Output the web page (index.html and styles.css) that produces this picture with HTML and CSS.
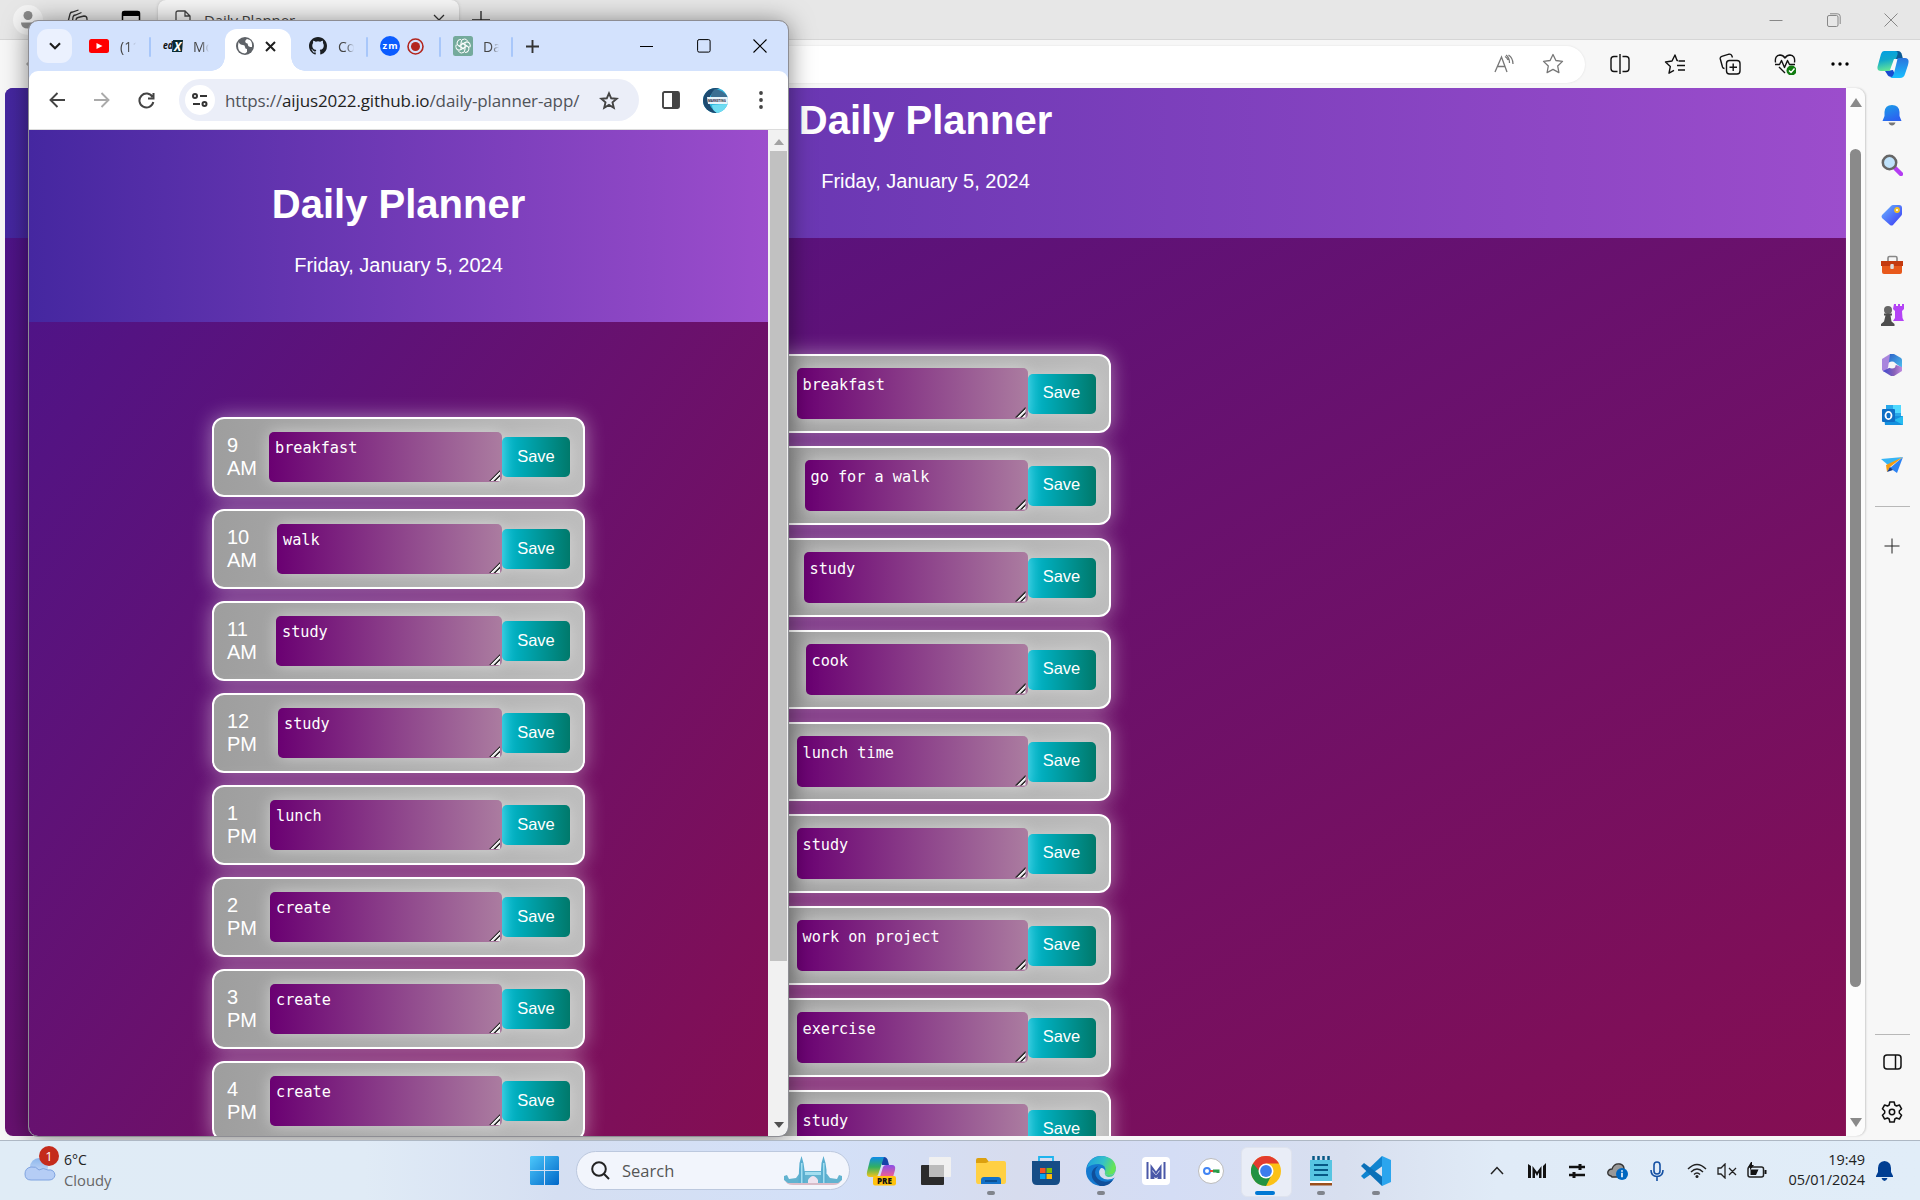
FILE: index.html
```html
<!DOCTYPE html>
<html lang="en">
<head>
<meta charset="utf-8">
<title>Daily Planner</title>
<link rel="stylesheet" href="styles.css">
</head>
<body>
<div class="desktop">

<!-- Edge window -->
<section class="edge">
  <header class="edge-title">
    <span class="avatar"><svg width="30" height="30" viewBox="0 0 30 30"><circle cx="15" cy="15" r="15" fill="#f4f4f4"/><circle cx="15" cy="10.500" r="4.500" fill="#8a8a8a"/><path d="M8 17.500h14q0 6-7 6t-7-6z" fill="#8a8a8a"/></svg></span>
    <span class="workspaces"><svg width="24" height="24" viewBox="0 0 24 24" fill="none" stroke="#333" stroke-width="1.300"><path d="M2 14l2-8q.5-2 2.500-2l6-2M6 17l1-8q.5-2 2.500-2l6-2.500M10 20v-8q0-2 2-2.500l6-1.500q3 0 3 3v6"/></svg></span>
    <span class="tabactions"><svg width="20" height="20" viewBox="0 0 20 20"><rect x="1.500" y="1.500" width="17" height="17" rx="2" fill="none" stroke="#000" stroke-width="1.500"/><path d="M1 6V3q0-2 2-2h14q2 0 2 2v3z"/></svg></span>
    <div class="edge-tab">
      <svg width="18" height="20" viewBox="0 0 18 20" fill="none" stroke="#444" stroke-width="1.300"><path d="M2 19V3q0-2 2-2h7l5 5v13zM11 1v5h5"/></svg>
      <span class="edge-tab-name">Daily Planner</span>
      <svg width="12" height="12" viewBox="0 0 12 12" stroke="#333" stroke-width="1.300"><path d="M1 1l10 10M11 1L1 11"/></svg>
    </div>
    <span class="edge-new"><svg width="18" height="18" viewBox="0 0 18 18" stroke="#222" stroke-width="1.300"><path d="M9 0v18M0 9h18"/></svg></span>
    <span class="edge-controls">
      <svg width="14" height="14" viewBox="0 0 14 14" stroke="#888"><path d="M.5 7.500h13"/></svg>
      <svg width="14" height="14" viewBox="0 0 14 14" fill="none" stroke="#888"><rect x=".5" y="2.500" width="10.500" height="11" rx="1.500"/><path d="M3 .8h7.500q2.700 0 2.700 2.700V11"/></svg>
      <svg width="14" height="14" viewBox="0 0 14 14" stroke="#888"><path d="M.5.5l13 13M13.500.5l-13 13"/></svg>
    </span>
  </header>
  <div class="edge-bar">
    <span class="edge-back"><svg width="20" height="20" viewBox="0 0 20 20" fill="none" stroke="#aaa" stroke-width="1.500"><path d="M9 4L3 10l6 6M3 10h15"/></svg></span>
    <div class="edge-url">
      <svg width="20" height="20" viewBox="0 0 20 20" fill="none" stroke="#777" stroke-width="1.300"><path d="M1 18L7.500 3 13 18M3.500 12.500H11M12 1q3.500 2.500 3.500 8M14 6q-1-2.500-3-3.500M14.500 1Q19 4 19 10"/></svg>
      <svg width="22" height="22" viewBox="0 0 22 22" fill="none" stroke="#777" stroke-width="1.300" stroke-linejoin="round"><path d="M11 1.500l2.900 6 6.600.9-4.800 4.600 1.200 6.600-5.900-3.200-5.900 3.200 1.200-6.600L1.500 8.400l6.600-.9z"/></svg>
    </div>
    <div class="edge-tools">
      <span><svg width="22" height="22" viewBox="0 0 22 22" fill="none" stroke="#111" stroke-width="1.400"><path d="M11 1v20M8.500 18.500H5q-3 0-3-3v-9q0-3 3-3h3.500M13.500 3.500H17q3 0 3 3v9q0 3-3 3h-3.500"/></svg></span>
      <span><svg width="22" height="22" viewBox="0 0 22 22" fill="none" stroke="#111" stroke-width="1.400" stroke-linejoin="round"><path d="M14 7.500h-1L11 2 8 8l-6.500 1 4.800 4.600-1.300 6.600 5-2.800M14.500 8H21M13 12.500h8M14 17h7"/></svg></span>
      <span><svg width="22" height="22" viewBox="0 0 22 22" fill="none" stroke="#111" stroke-width="1.400"><rect x="7.500" y="7.500" width="13.500" height="13.500" rx="3"/><path d="M14.200 10.500v7.500M10.500 14.200H18M5.500 15.500Q4 15.500 3.500 14L1.300 6q-.5-2 1.500-2.700L10 1.200q2-.4 2.700 1.300l.8 2"/></svg></span>
      <span><svg width="22" height="22" viewBox="0 0 22 22" fill="none" stroke="#111" stroke-width="1.400" stroke-linejoin="round"><path d="M1.500 9.500Q.5 2.500 6 2q3 0 5 3 2-3 5-3 5.500.5 4.500 7.500M1 11.500h4.500l2-4 3 7 3-7 2 4H21M5 14l6 6"/><circle cx="17.500" cy="17.500" r="5" fill="#107c10" stroke="none"/><path d="M15 17.500l2 2 3.500-4" stroke="#fff"/></svg></span>
      <span><svg width="18" height="4" viewBox="0 0 18 4"><circle cx="2" cy="2" r="1.700"/><circle cx="9" cy="2" r="1.700"/><circle cx="16" cy="2" r="1.700"/></svg></span>
    </div>
    <span class="copilot"><svg width="32" height="28" viewBox="0 0 32 28"><defs><linearGradient id="cpa" x2=".2" y2="1"><stop offset="0" stop-color="#009fe3"/><stop offset=".5" stop-color="#11a8cc"/><stop offset="1" stop-color="#5fe39a"/></linearGradient><linearGradient id="cpb" x2="0" y2="1"><stop offset="0" stop-color="#2b74dd"/><stop offset="1" stop-color="#19bfff"/></linearGradient></defs><path d="M16 1h5q3 0 4 4l1 4h-7z" fill="#0c5a94"/><path d="M8 21l8-1 3 7h-4q-4 0-5-3z" fill="#184bd0"/><path d="M7 1h11q4 0 2 5l-4 11q-1 4-5 4H4q-5 0-3-6L4 4q1-3 3-3z" fill="url(#cpa)"/><path d="M21 8h7q5 0 3 7l-3 9q-1 4-5 4H13q3-1 4-5l3-12q.5-3 1-3z" fill="url(#cpb)"/><path d="M17 9h3l-4 11h-3z" fill="#f7f7f7"/></svg></span>
  </div>
  <div class="edge-main">
    <div class="page edge-page">
      <div class="hero"><h1>Daily Planner</h1><p>Friday, January 5, 2024</p></div>
      <div class="slots">
        <div class="slot"><span class="hour">9 AM</span><div class="note" style="width:231px">breakfast</div><button class="save">Save</button></div>
        <div class="slot"><span class="hour">10 AM</span><div class="note" style="width:223px">go for a walk</div><button class="save">Save</button></div>
        <div class="slot"><span class="hour">11 AM</span><div class="note" style="width:224px">study</div><button class="save">Save</button></div>
        <div class="slot"><span class="hour">12 PM</span><div class="note" style="width:222px">cook</div><button class="save">Save</button></div>
        <div class="slot"><span class="hour">1 PM</span><div class="note" style="width:231px">lunch time</div><button class="save">Save</button></div>
        <div class="slot"><span class="hour">2 PM</span><div class="note" style="width:231px">study</div><button class="save">Save</button></div>
        <div class="slot"><span class="hour">3 PM</span><div class="note" style="width:231px">work on project</div><button class="save">Save</button></div>
        <div class="slot"><span class="hour">4 PM</span><div class="note" style="width:231px">exercise</div><button class="save">Save</button></div>
        <div class="slot"><span class="hour">5 PM</span><div class="note" style="width:231px">study</div><button class="save">Save</button></div>
      </div>
    </div>
    <div class="edge-scroll"><i class="up"></i><b></b><i class="down"></i></div>
    <aside class="sidebar">
      <span><svg width="20" height="22" viewBox="0 0 20 22"><defs><linearGradient id="bel" x2=".5" y2="1"><stop offset="0" stop-color="#1aa0e8"/><stop offset="1" stop-color="#2b62f0"/></linearGradient></defs><path d="M10 1q7 0 7.500 7v4l2 5H.5l2-5V8Q3 1 10 1z" fill="url(#bel)"/><path d="M6.500 18.500h7q-1 3-3.500 3t-3.500-3z" fill="#777"/></svg></span>
      <span><svg width="22" height="22" viewBox="0 0 22 22"><path d="M14 14l6 6" stroke="#b43df2" stroke-width="4.500" stroke-linecap="round"/><circle cx="8.500" cy="8.500" r="6.700" fill="#bfe2fb" stroke="#666" stroke-width="2.500"/></svg></span>
      <span><svg width="22" height="22" viewBox="0 0 22 22"><defs><linearGradient id="tg" x2="1" y2="1"><stop offset="0" stop-color="#6ab8ff"/><stop offset="1" stop-color="#3a35f4"/></linearGradient></defs><path d="M12 1h6q3 0 3 3v6q0 1-1 2l-8 9q-1.500 1-3 0L1 14q-1-1.500 0-3L10 2q1-1 2-1z" fill="url(#tg)"/><circle cx="16" cy="6" r="2" fill="#fff" stroke="#f5c020" stroke-width="1.800"/></svg></span>
      <span><svg width="24" height="20" viewBox="0 0 24 20"><path d="M8 6V3q0-1.500 1.500-1.500h6Q17 1.500 17 3v3" fill="none" stroke="#888" stroke-width="1.600"/><path d="M2 10h20v7q0 2-2 2H4q-2 0-2-2z" fill="#e8591c"/><path d="M1 6h22v5H1z" fill="#c43a10"/><rect x="10.300" y="9" width="3.500" height="5" rx="1" fill="#ddd"/></svg></span>
      <span><svg width="24" height="24" viewBox="0 0 24 24"><path d="M14 1h2v2h2V1h2v2h2V1h2v5l-2 2 .5 7 1.500 3H13l2-3V8l-2-2z" fill="#b443f5"/><circle cx="8" cy="7" r="4" fill="#666"/><path d="M4 10.500h8v2h-1.500l1 6 3 2.500v2H1v-2l3-2.500 1.500-6H4z" fill="#4d4d4d"/></svg></span>
      <span><svg width="22" height="24" viewBox="0 0 22 24"><defs><linearGradient id="ma" x2="1" y2="1"><stop offset="0" stop-color="#2f63c8"/><stop offset="1" stop-color="#4cc0ee"/></linearGradient><linearGradient id="mb" x2="1" y2="0"><stop offset="0" stop-color="#3f49cf"/><stop offset=".6" stop-color="#8a62b8"/><stop offset="1" stop-color="#c08ae0"/></linearGradient></defs><path d="M1 6l8-5v8l-3 8-3 2-2-2z" fill="#a986dd"/><path d="M9 1h4l7 4q1 1 1 2v8l-7-5-6-1z" fill="url(#ma)"/><path d="M2 18l8-4 5-2 6 2v4l-8 5h-3z" fill="url(#mb)"/><circle cx="11" cy="12" r="3.600" fill="#f7f7f7"/></svg></span>
      <span><svg width="22" height="22" viewBox="0 0 22 22"><rect x="5" y="1" width="15" height="14" fill="#28a8ea"/><path d="M12 1h8v8h-8z" fill="#50d9ff"/><path d="M3 12h19v9H4z" fill="#1490df"/><path d="M22 12v9l-9-5z" fill="#28bdf0"/><rect x="1" y="5" width="13" height="13" rx="1" fill="#0f6fc6"/><ellipse cx="7.500" cy="11.500" rx="3" ry="3.600" fill="none" stroke="#fff" stroke-width="1.800"/></svg></span>
      <span><svg width="22" height="18" viewBox="0 0 22 18"><path d="M0 3L22 1 7 9z" fill="#36b5f5"/><path d="M22 1L5 9l1 7 3-5z" fill="#f39c12"/><path d="M22 1L9 12l7 5z" fill="#2b82f3"/><path d="M6 16l3-5 3 3z" fill="#1a3f88"/></svg></span>
      <hr>
      <span><svg width="16" height="16" viewBox="0 0 16 16" stroke="#222"><path d="M8 .5v15M.5 8h15"/></svg></span>
      <hr class="low">
      <span><svg width="19" height="16" viewBox="0 0 19 16" fill="none" stroke="#111" stroke-width="1.500"><rect x="1" y="1" width="17" height="14" rx="3"/><path d="M12.500 1v14"/></svg></span>
      <span><svg width="22" height="22" viewBox="0 0 22 22" fill="none" stroke="#111" stroke-width="1.500" stroke-linejoin="round"><path d="M8.800 1h4.400l.6 3 1.700 1 2.900-1 2.200 3.800L18.300 10v2l2.300 2.200-2.200 3.800-2.900-1-1.700 1-.6 3H8.800l-.6-3-1.700-1-2.900 1-2.200-3.800L3.700 12v-2L1.400 7.800 3.600 4l2.900 1 1.700-1z"/><circle cx="11" cy="11" r="2.700"/></svg></span>
    </aside>
  </div>
</section>

<!-- Chrome window -->
<section class="chrome">
  <div class="tabs">
    <span class="tab-search"><svg width="12" height="8" viewBox="0 0 12 8" fill="none" stroke="#1f1f1f" stroke-width="2.200"><path d="M1 1.200l5 5 5-5"/></svg></span>
    <div class="tab t1 line"><svg width="20" height="14" viewBox="0 0 20 14"><rect width="20" height="14" rx="2.500" fill="#f00"/><path d="M7.500 4l6 3-6 3z" fill="#fff"/></svg><span class="tname">(11)</span></div>
    <div class="tab t2"><svg width="20" height="13" viewBox="0 0 20 13"><path d="M10 0h10l-1 12h-10z" fill="#0b2c33"/><text x="0" y="9" font-family="Open Sans, sans-serif" font-size="10" font-weight="700" font-style="italic" fill="#111" textLength="10" lengthAdjust="spacingAndGlyphs">ed</text><text x="11" y="10.500" font-family="Open Sans, sans-serif" font-size="12" font-weight="700" font-style="italic" fill="#fff">X</text></svg><span class="tname">Mo</span></div>
    <div class="tab active"><svg width="18" height="18" viewBox="0 0 18 18"><circle cx="9" cy="9" r="9" fill="#5f6368"/><path d="M2.500 5Q4 8 7 8q2 0 2 2t2 2v3l-2 1.500Q2 16 2 9zM11 2q-3 2-1 4 2 0 2 2t4 2q.500-5-2-7z" fill="#fff"/></svg><svg width="11" height="11" viewBox="0 0 11 11" stroke="#1f1f1f" stroke-width="2"><path d="M1 1l9 9M10 1l-9 9"/></svg></div>
    <div class="tab t3 line"><svg width="18" height="18" viewBox="0 0 16 16"><path fill="#1b1f23" d="M8 0C3.580 0 0 3.580 0 8c0 3.540 2.290 6.530 5.470 7.590.4.070.55-.17.55-.38 0-.19-.01-.82-.01-1.490-2.010.37-2.530-.49-2.690-.94-.09-.23-.48-.94-.82-1.130-.28-.15-.68-.52-.01-.53.63-.01 1.080.58 1.230.82.72 1.210 1.870.87 2.330.66.070-.52.28-.87.51-1.070-1.780-.2-3.640-.89-3.640-3.950 0-.87.31-1.590.82-2.150-.08-.2-.36-1.020.08-2.120 0 0 .67-.21 2.200.82a7.600 7.600 0 014 0c1.530-1.040 2.200-.82 2.200-.82.44 1.100.16 1.920.08 2.120.51.56.82 1.270.82 2.150 0 3.070-1.870 3.750-3.650 3.950.29.25.54.73.54 1.480 0 1.070-.01 1.930-.01 2.200 0 .21.15.46.55.38A8 8 0 0016 8c0-4.420-3.580-8-8-8z"/></svg><span class="tname">Co</span></div>
    <div class="tab t4 line"><svg width="20" height="20" viewBox="0 0 20 20"><circle cx="10" cy="10" r="10" fill="#0b5cff"/><text x="10" y="13" text-anchor="middle" font-family="Open Sans, sans-serif" font-weight="700" font-size="9.500" textLength="15" fill="#fff">zm</text></svg><svg width="17" height="17" viewBox="0 0 17 17"><circle cx="8.500" cy="8.500" r="7.500" fill="none" stroke="#b3261e" stroke-width="1.600"/><circle cx="8.500" cy="8.500" r="4.500" fill="#b3261e"/></svg></div>
    <div class="tab t5 line"><svg width="20" height="20" viewBox="0 0 20 20"><rect width="20" height="20" rx="2.500" fill="#74aa9c"/><g fill="none" stroke="#fff" stroke-width="1"><path id="petal" d="M8 13V6.500q0-3.500 3.500-3.500 2 0 3 2"/><use href="#petal" transform="rotate(60 10 10)"/><use href="#petal" transform="rotate(120 10 10)"/><use href="#petal" transform="rotate(180 10 10)"/><use href="#petal" transform="rotate(240 10 10)"/><use href="#petal" transform="rotate(300 10 10)"/></g></svg><span class="tname">Da</span></div>
    <span class="newtab"><svg width="13" height="13" viewBox="0 0 13 13" stroke="#333" stroke-width="1.900"><path d="M6.500 0v13M0 6.500h13"/></svg></span>
    <span class="wincontrols">
      <svg width="14" height="14" viewBox="0 0 14 14" stroke="#000"><path d="M0 7.500h13"/></svg>
      <svg width="14" height="14" viewBox="0 0 14 14" fill="none" stroke="#000"><rect x=".6" y=".6" width="12.500" height="12.500" rx="1.500"/></svg>
      <svg width="14" height="14" viewBox="0 0 14 14" stroke="#000" stroke-width="1.100"><path d="M.5.5l13 13M13.500.5l-13 13"/></svg>
    </span>
  </div>
  <div class="toolbar">
    <span class="nav"><svg width="16" height="16" viewBox="0 0 16 16" fill="none" stroke="#444" stroke-width="1.900"><path d="M8.500 1l-7 7 7 7M1.500 8H16"/></svg></span>
    <span class="nav"><svg width="16" height="16" viewBox="0 0 16 16" fill="none" stroke="#aaa" stroke-width="1.900"><path d="M7.500 1l7 7-7 7M14.500 8H0"/></svg></span>
    <span class="nav"><svg width="17" height="17" viewBox="0 0 17 17" fill="none" stroke="#444" stroke-width="2"><path d="M14.500 5A7 7 0 1 0 15.300 10M15.500 1v5.500H10"/></svg></span>
    <div class="omnibox">
      <span class="siteinfo"><svg width="16" height="14" viewBox="0 0 16 14" fill="none" stroke="#333" stroke-width="2"><circle cx="3" cy="3" r="2"/><path d="M8 3h7M1 11h7"/><circle cx="12.500" cy="11" r="2"/></svg></span>
      <span class="url">https://<b>aijus2022.github.io</b>/daily-planner-app/</span>
      <svg width="20" height="19" viewBox="0 0 20 19" fill="none" stroke="#444" stroke-width="1.900"><path d="M10 2.300l2.200 5 5.500.5-4.200 3.600 1.300 5.300-4.800-2.800-4.800 2.800 1.300-5.300L2.300 7.800l5.500-.5z"/></svg>
    </div>
    <span class="tool"><svg width="18" height="18" viewBox="0 0 18 18"><rect x="1" y="1" width="16" height="16" rx="1.500" fill="none" stroke="#444" stroke-width="1.900"/><path d="M10 1h7v16h-7z" fill="#444"/></svg></span>
    <span class="tool profile"><svg width="25" height="25" viewBox="0 0 25 25"><defs><clipPath id="pc"><circle cx="12.500" cy="12.500" r="12.500"/></clipPath></defs><g clip-path="url(#pc)"><path fill="#2cb4dc" d="M0 0h25v25H0z"/><path d="M0 0h18q-10 2-12 12 0 8 8 13H0z" fill="#1d4a70"/><path d="M12 1q8 1 13 8H8q0-5 4-8z" fill="#3c6f92"/><path d="M9 17q8-1 16-1l-5 9h-6q-5-3-5-8z" fill="#6fdcf2"/><path d="M4 9h21v7H5z" fill="#e8f4fa"/><text x="5" y="14" font-family="Open Sans, sans-serif" font-weight="700" font-size="4" textLength="18" lengthAdjust="spacingAndGlyphs" fill="#223">MARKETING</text></g></svg></span>
    <span class="tool dots"><svg width="4" height="18" viewBox="0 0 4 18" fill="#444"><circle cx="2" cy="2" r="1.900"/><circle cx="2" cy="9" r="1.900"/><circle cx="2" cy="16" r="1.900"/></svg></span>
  </div>
  <div class="chrome-main">
    <div class="page chrome-page">
      <div class="hero"><h1>Daily Planner</h1><p>Friday, January 5, 2024</p></div>
      <div class="slots">
        <div class="slot"><span class="hour">9<br>AM</span><div class="note" style="width:233px">breakfast</div><button class="save">Save</button></div>
        <div class="slot"><span class="hour">10<br>AM</span><div class="note" style="width:225px">walk</div><button class="save">Save</button></div>
        <div class="slot"><span class="hour">11<br>AM</span><div class="note" style="width:226px">study</div><button class="save">Save</button></div>
        <div class="slot"><span class="hour">12<br>PM</span><div class="note" style="width:224px">study</div><button class="save">Save</button></div>
        <div class="slot"><span class="hour">1<br>PM</span><div class="note" style="width:232px">lunch</div><button class="save">Save</button></div>
        <div class="slot"><span class="hour">2<br>PM</span><div class="note" style="width:232px">create</div><button class="save">Save</button></div>
        <div class="slot"><span class="hour">3<br>PM</span><div class="note" style="width:232px">create</div><button class="save">Save</button></div>
        <div class="slot"><span class="hour">4<br>PM</span><div class="note" style="width:232px">create</div><button class="save">Save</button></div>
      </div>
    </div>
    <div class="chrome-scroll"><i class="up"></i><b></b><i class="down"></i></div>
  </div>
</section>

<!-- Taskbar -->
<footer class="taskbar">
  <div class="weather">
    <span class="cloud"><svg width="32" height="24" viewBox="0 0 32 24"><defs><linearGradient id="cl" x2="0" y2="1"><stop offset="0" stop-color="#8db7ec"/><stop offset="1" stop-color="#cfdefa"/></linearGradient></defs><circle cx="15" cy="10" r="9" fill="url(#cl)"/><path d="M7 10q5-1 8 3 4-3 9 0 6-1 7 5-1 5-6 5H7q-6 0-6-6t6-7z" fill="#b5cdf5" stroke="#7fa3e0"/></svg><em>1</em></span>
    <span class="wtext">6°C<small>Cloudy</small></span>
  </div>
  <span class="app"><svg width="29" height="29" viewBox="0 0 29 29"><defs><linearGradient id="win" gradientUnits="userSpaceOnUse" x1="0" y1="0" x2="29" y2="29"><stop offset="0" stop-color="#4cc8fb"/><stop offset="1" stop-color="#0067c8"/></linearGradient></defs><path d="M1 0h13v14H0V1zM15 0h13l1 1v13H15zM0 15h14v14H1l-1-1zM15 15h14v13l-1 1H15z" fill="url(#win)"/></svg></span>
  <div class="search"><svg width="19" height="19" viewBox="0 0 19 19" fill="none" stroke="#222" stroke-width="2"><circle cx="8" cy="8" r="6.800"/><path d="M12.800 12.800l5.200 5.200"/></svg><span>Search</span>
    <svg width="58" height="31" viewBox="0 0 58 31"><path d="M1 25h56q-1 5-8 5H9q-7 0-8-5z" fill="#d8bcc8"/><path d="M0 21l3-1 2 4 7-1 3-4h5v-3h18v3h5l3 4 7 1 2-4 3 1v4l-4 3H4l-4-3z" fill="#62b3d0"/><path d="M15 15l.5-7 2-7 2 7 1 7v13h-6zM37 15l.5-7 2-7 2 7 1 7v13h-6z" fill="#58aed0"/><path d="M17 8h1.500v20H17zM39 8h1.500v20H39zM21 17h16v3H21z" fill="#a3def0"/><path d="M24 28v-3q5-8 10 0v3z" fill="#eee3ef"/></svg>
  </div>
  <div class="apps">
    <span class="app"><svg width="30" height="30" viewBox="0 0 30 30"><defs><linearGradient id="pa" x2="0" y2="1"><stop offset="0" stop-color="#0f8be8"/><stop offset=".5" stop-color="#32b060"/><stop offset="1" stop-color="#f5c51a"/></linearGradient><linearGradient id="pb" x2="0" y2="1"><stop offset="0" stop-color="#8a4fe8"/><stop offset="1" stop-color="#f5608c"/></linearGradient></defs><path d="M14 1h4q3 0 4 4l1 4h-7z" fill="#1643a8"/><path d="M7 1h11L12 19q-1 2-3 2H4q-4 0-3-5L4 4q1-3 3-3z" fill="url(#pa)"/><path d="M20 9h6q4 0 3 5l-2 7H14l3-10q1-2 3-2z" fill="url(#pb)"/><rect x="7" y="20" width="23" height="9.500" rx="2" fill="#ffc20e"/><text x="18.500" y="27.700" text-anchor="middle" font-family="Open Sans, sans-serif" font-weight="800" font-size="8" fill="#111">PRE</text></svg></span>
    <span class="app"><svg width="30" height="30" viewBox="0 0 30 30"><rect x="0" y="9" width="23" height="20" rx="1" fill="#2b2b2b"/><rect x="8" y="1" width="22" height="20" rx="1" fill="#f0f0f0"/><path d="M8 9h15v12H8z" fill="#bbb"/></svg></span>
    <span class="app run"><svg width="30" height="28" viewBox="0 0 30 28"><path d="M0 3q0-2 2-2h8l3 4h15v6H0z" fill="#dca00f"/><path d="M0 6h10l4-2h14q2 0 2 2v18q0 3-2 3H2q-2 0-2-3z" fill="#ffd044"/><path d="M5 27v-4q0-3 3-3h14q3 0 3 3v4z" fill="#1271c9"/><path d="M9 24h12" stroke="#073e78" stroke-width="1.300"/></svg></span>
    <span class="app"><svg width="30" height="30" viewBox="0 0 30 30"><path d="M8 6V1h14v5" fill="none" stroke="#1fb4ee" stroke-width="1.800"/><path d="M1 5h28v19q0 5-5 5H6q-5 0-5-5z" fill="#164d86"/><path d="M9 12h5.500v5H9z" fill="#f35325"/><path d="M15.500 12H21v5h-5.500z" fill="#81bc06"/><path d="M9 18h5.500v5H9z" fill="#05a6f0"/><path d="M15.500 18H21v5h-5.500z" fill="#ffba08"/></svg></span>
    <span class="app run"><svg width="30" height="30" viewBox="0 0 30 30"><defs><linearGradient id="eg" x2="1" y2=".3"><stop offset="0" stop-color="#1b9de2"/><stop offset=".6" stop-color="#35c1c8"/><stop offset="1" stop-color="#66e457"/></linearGradient></defs><circle cx="15" cy="15" r="15" fill="#1479d0"/><path d="M1 12Q4 0 16 0q13 1 14 12 0 7-7 7-5 0-4-3 2-7-6-8-8 0-12 4z" fill="url(#eg)"/><path d="M12 10q-6 6 0 13 6 5 15 1-5 7-13 6Q4 24 6 16q1-4 6-6z" fill="#104f9a"/><path d="M19 16q-1 3 4 3 7 0 7-7v9q-9 5-15 0-4-5 0-9 4 0 4 4z" fill="#d7dcee"/><path d="M19 16q-1 3 4 3 7 0 7-7-1 10-8 9-4-1-3-5z" fill="#49d18c"/></svg></span>
    <span class="app"><svg width="28" height="28" viewBox="0 0 28 28"><rect width="28" height="28" rx="4" fill="#fff"/><path d="M5.500 5v17M22.500 5v17M9.500 22V10l4.500 6 4.500-6v12M11.500 22v-5l2.500 3 2.500-3v5" fill="none" stroke="#4a58a8" stroke-width="2"/></svg></span>
    <span class="app"><svg width="26" height="26" viewBox="0 0 26 26"><circle cx="13" cy="13" r="12.500" fill="#fff" stroke="#bbb"/><circle cx="9" cy="13" r="3" fill="none" stroke="#4285f4" stroke-width="2"/><path d="M12 13h4" stroke="#ea4335" stroke-width="2"/><path d="M15 13h5v2" fill="none" stroke="#2a9c48" stroke-width="3"/></svg></span>
    <span class="app run current"><svg width="30" height="30" viewBox="0 0 30 30"><circle cx="15" cy="15" r="15" fill="#fbc116"/><path d="M15 15L2 7.500A15 15 0 0 0 15 30l6-12z" fill="#229342"/><path d="M15 15H8.500L2 7.500A15 15 0 0 1 28 7.500H15z" fill="#e33b2e"/><circle cx="15" cy="15" r="7.500" fill="#fff"/><circle cx="15" cy="15" r="5.900" fill="#3b7ded"/></svg></span>
    <span class="app run"><svg width="22" height="30" viewBox="0 0 22 30"><path d="M0 26h22v3.500H0z" fill="#9a4f1c"/><path d="M0 4h22v22H0z" fill="#57c5e2"/><path d="M0 25h22v2H0z" fill="#fff"/><path d="M4 9h14M4 14h14M4 19h14" stroke="#075985" stroke-width="1.900"/><path d="M3.500 0v4M8.500 0v4M13.500 0v4M18.500 0v4" stroke="#075985" stroke-width="2.500"/></svg></span>
    <span class="app run"><svg width="30" height="30" viewBox="0 0 30 30"><path d="M0 20l21-20 2 5v4L3 23z" fill="#1084d0"/><path d="M0 10l3-3 20 15v5l-2 3z" fill="#0b70b8"/><path d="M21 0l9 4v22l-9 4z" fill="#2ba5ee"/></svg></span>
  </div>
  <div class="tray">
    <span><svg width="14" height="9" viewBox="0 0 14 9" fill="none" stroke="#222" stroke-width="1.500"><path d="M1 8l6-6.500L13 8"/></svg></span>
    <span><svg width="18" height="16" viewBox="0 0 18 16" fill="#111"><path d="M0 1l3 2v12H0zM18 0l-3 3v12h3zM4.500 3L9 9l4.500-6v12H11V9.500L9 13 7 9.500V15H4.500z"/></svg></span>
    <span><svg width="18" height="16" viewBox="0 0 18 16" stroke="#111" fill="none"><path d="M1 4h16M1 12h16" stroke-width="2.500"/><path d="M12 1v6M6 9v6" stroke-width="3"/></svg></span>
    <span><svg width="21" height="18" viewBox="0 0 21 18"><path d="M4 14Q0 13 1 9.500 2 7 5 7q2-6 8-5 4 1 4 5l-6 8H5z" fill="#999" stroke="#333" stroke-width="1.400"/><circle cx="15" cy="12" r="6" fill="#0067c0"/><path d="M15 10.800v4.400M15 8.200v1.500" stroke="#fff" stroke-width="1.600"/></svg></span>
    <span><svg width="14" height="20" viewBox="0 0 14 20" fill="none" stroke="#1450a3" stroke-width="1.600"><rect x="4" y="1" width="6" height="12" rx="3"/><path d="M1 9q0 6.500 6 6.500T13 9M7 16v4"/></svg></span>
    <span class="q first"><svg width="20" height="16" viewBox="0 0 20 16" fill="none" stroke="#222" stroke-width="1.400"><path d="M1 6q9-9 18 0M4 9q6-6 12 0M7 11.500q3-3 6 0"/><circle cx="10" cy="13.500" r="1.500" fill="#222" stroke="none"/></svg></span>
    <span class="q"><svg width="20" height="16" viewBox="0 0 20 16" fill="none" stroke="#222" stroke-width="1.300"><path d="M1 5h3l4-4v14l-4-4H1zM12 5l7 7M19 5l-7 7"/></svg></span>
    <span class="q"><svg width="20" height="17" viewBox="0 0 20 17"><rect x="1" y="5" width="15.500" height="10" rx="2" fill="none" stroke="#222" stroke-width="1.500"/><path d="M3.500 7.500h8L9 13H3.500zM17.500 8h2v4h-2zM4 0L1 5h2v3l4-5H5V0z" fill="#111"/></svg></span>
    <div class="clock">19:49<br>05/01/2024</div>
    <span class="bell"><svg width="17" height="20" viewBox="0 0 17 20" fill="#003e92"><path d="M8.500 0Q15 1 15 7v4l2 4v1H0v-1l2-4V7Q2 1 8.500 0zM5.500 17h6q-1 3-3 3t-3-3z"/></svg></span>
  </div>
</footer>
</div>
</body>
</html>
```

FILE: styles.css
```css
* { box-sizing: border-box; }
body { margin: 0; font-family: "Open Sans", "Noto Sans", sans-serif; }
svg { display: block; flex: none; }
.desktop { position: relative; width: 1920px; height: 1200px; overflow: hidden; display: flex; flex-direction: column; background: #f7f7f7; }

/* Edge */
.edge { height: 1140px; display: flex; flex-direction: column; background: #f7f7f7; }
.edge-title { height: 40px; background: #e7e7e7; border-bottom: 1px solid #d6d6d6; display: flex; align-items: center; }
.avatar { margin-left: 13px; }
.workspaces { margin-left: 23px; }
.tabactions { margin-left: 31px; }
.edge-tab { align-self: stretch; width: 301px; margin-left: 17px; padding: 0 14px 0 16px; display: flex; align-items: center; background: #f5f5f5; border-radius: 8px 8px 0 0; box-shadow: 0 0 3px #bbb; }
.edge-tab-name { margin-left: 12px; flex: 1; font-size: 15px; color: #444; line-height: 20px; letter-spacing: -.1px; }
.edge-new { margin-left: 13px; }
.edge-controls { margin-left: auto; margin-right: 22px; display: flex; gap: 43.500px; }
.edge-bar { height: 48px; display: flex; align-items: center; }
.edge-back { width: 400px; padding-left: 24px; }
.edge-url { width: 1185px; height: 37px; border-radius: 19px; background: #fff; box-shadow: 0 0 2px #ddd; display: flex; align-items: center; justify-content: flex-end; gap: 28px; padding-right: 21px; }
.edge-tools { margin-left: 7px; display: flex; align-items: center; }
.edge-tools span { width: 55px; display: flex; justify-content: center; }
.copilot { width: 51px; display: flex; justify-content: center; }
.edge-main { height: 1052px; display: flex; padding-left: 5px; }
.edge-page { width: 1841px; border-radius: 8px 0 0 8px; }
.edge-scroll { width: 19px; height: 1048px; background: #fcfcfc; border-radius: 0 9px 9px 0; box-shadow: 1px 0 2px #ccc; display: flex; flex-direction: column; align-items: center; justify-content: space-between; padding: 10px 0 9px; }
.edge-scroll b { width: 11px; height: 838px; margin-bottom: 90px; border-radius: 6px; background: #8a8a8a; }
.up { border: 6px solid transparent; border-top: 0; border-bottom: 9px solid #8a8a8a; }
.down { border: 6px solid transparent; border-bottom: 0; border-top: 9px solid #8a8a8a; }
.sidebar { width: 54px; padding: 2px 0 3px; display: flex; flex-direction: column; align-items: center; }
.sidebar span { width: 100%; height: 50px; display: flex; align-items: center; justify-content: center; }
.sidebar hr { width: 35px; margin: 16px 0 14px; border: 0; height: 1px; flex: none; background: #b8b8b8; }
.sidebar hr.low { margin: auto 0 2px; }

/* Planner page, shown in both windows */
.page { height: 1048px; overflow: hidden; background: linear-gradient(to bottom right, #4a148c, #880e4f 106%); font-family: "Liberation Sans", Arial, sans-serif; color: #fff; }
.hero { height: 192px; padding-top: 51px; text-align: center; background: linear-gradient(to right, #4527a0, #9c4dcc); }
.hero h1 { margin: 0; font-size: 40px; line-height: 46px; }
.hero p { margin: 24px 0 0; font-size: 20px; line-height: 28px; }
.slots { width: 373px; margin: 95px auto 0; display: flex; flex-direction: column; gap: 12px; }
.slot { height: 80px; flex: none; display: flex; align-items: center; padding: 0 13px; border: 2px solid #fff; border-radius: 12px; background: linear-gradient(to right, #9e9e9e, #bdbdbd); box-shadow: 0 0 20px rgba(255,255,255,.45); }
.hour { width: 42px; flex: 1; font-size: 20px; line-height: 23px; }
.note { position: relative; height: 50px; flex: none; padding: 5px 6px; border-radius: 5px; background: linear-gradient(to right, #6a0072, #ab7ca0); box-shadow: 0 0 15px rgba(255,255,255,.45); font: 15.200px/22px "DejaVu Sans Mono", monospace; }
.note::after { content: ""; position: absolute; right: 2px; bottom: 1px; width: 11px; height: 11px; background: linear-gradient(135deg, transparent 45%, #333 46% 55%, #eee 56% 68%, #333 69% 78%, #eee 79%); clip-path: polygon(100% 0, 100% 100%, 0 100%); }
.save { width: 68px; height: 40px; flex: none; padding: 0 0 2px; border: 0; border-radius: 5px; background: linear-gradient(to right, #00bcd4, #00796b); box-shadow: 0 0 15px rgba(255,255,255,.35); color: #fff; font: 16.500px "Liberation Sans", Arial, sans-serif; }
.edge-page .hero { margin-top: -42px; }
.edge-page .slots { width: 374px; padding-right: 2px; margin-top: 116px; gap: 13px; }
.edge-page .slot { height: 79px; }
.edge-page .note { height: 51px; margin-top: -1px; padding-top: 6px; }

/* Chrome window floats over Edge */
.chrome { position: absolute; left: 29px; top: 21px; width: 759px; height: 1115px; display: flex; flex-direction: column; background: #d3e2fd; border-radius: 9px; overflow: hidden; outline: 1px solid #8d8d93; box-shadow: 0 2px 26px rgba(0,0,0,.5); }
.tabs { height: 50px; display: flex; padding: 8px 21px 0 8px; }
.tabs > * { height: 34px; }
.tab-search { width: 35px; border-radius: 11px; background: #ebf1fe; display: flex; align-items: center; justify-content: center; }
.tab { display: flex; align-items: center; position: relative; }
.line::after { content: ""; position: absolute; right: 0; top: 8px; width: 2.500px; height: 20px; border-radius: 2px; background: #a8c7fa; }
.tname { width: 16px; overflow: hidden; white-space: nowrap; font-size: 14px; color: #444; -webkit-mask: linear-gradient(to right, #000 50%, transparent); }
.t1 { width: 79px; padding-left: 17px; gap: 11px; }
.t2 { width: 74px; padding-left: 12px; gap: 10px; }
.t3 { width: 77px; padding-left: 18px; gap: 11px; }
.t4 { width: 73px; padding-left: 12px; gap: 7px; }
.t5 { width: 72px; padding-left: 12px; gap: 10px; }
.tabs .active { width: 66px; height: 42px; padding: 0 15px 8px 11px; justify-content: space-between; background: #fff; border-radius: 12px 12px 0 0; }
.active::before, .active::after { content: ""; position: absolute; bottom: 0; width: 14px; height: 14px; }
.active::before { right: 100%; background: radial-gradient(circle at 0 0, transparent 13.500px, #fff 14px); }
.active::after { left: 100%; background: radial-gradient(circle at 100% 0, transparent 13.500px, #fff 14px); }
.newtab { padding-left: 13px; display: flex; align-items: center; }
.wincontrols { margin-left: auto; display: flex; align-items: center; gap: 42.500px; }
.toolbar { height: 59px; padding-left: 5px; display: flex; align-items: center; background: #fff; border-bottom: 1px solid #dcdcdc; border-radius: 9px 9px 0 0; }
.nav { width: 45px; display: flex; justify-content: center; }
.omnibox { width: 460px; height: 42px; margin-left: 10px; padding: 0 20px 0 6px; border-radius: 21px; background: #ebeef8; display: flex; align-items: center; }
.siteinfo { width: 30px; height: 30px; border-radius: 50%; background: #fff; display: flex; align-items: center; justify-content: center; }
.url { flex: 1; margin-left: 10px; font-size: 17px; white-space: nowrap; color: #50535a; letter-spacing: -.12px; }
.url b { font-weight: 400; color: #1f1f1f; }
.tool { width: 45px; display: flex; justify-content: center; margin-left: 9px; }
.profile { margin-left: 0; }
.dots { margin-left: 0; }
.chrome-main { display: flex; height: 1006px; }
.chrome-page { width: 739px; height: 1006px; }
.chrome-scroll { width: 20px; background: #f1f1f1; display: flex; flex-direction: column; align-items: center; padding: 9px 0 8px 1px; }
.chrome-scroll b { width: 17px; height: 810px; margin: 6px 0 auto; background: #c1c1c1; }
.chrome-scroll i { border-left-width: 5px; border-right-width: 5px; }
.chrome-scroll .up { border-bottom: 6px solid #a3a3a3; }
.chrome-scroll .down { border-top: 6px solid #505050; }

/* Taskbar */
.taskbar { position: relative; height: 60px; display: flex; align-items: center; border-top: 1px solid #aeb8c4; background: linear-gradient(to right, #e0ecf6 0, #e0ebf6 19%, #d5dff2 29%, #d3e0f8 43%, #d7dcee 53%, #d4ddf5 61%, #d8dfef 70%, #e0ebf7 78%, #e1edf8); }
.weather { width: 517px; padding-left: 24px; display: flex; align-items: center; gap: 8px; }
.cloud { position: relative; top: -2px; }
.cloud em { position: absolute; right: -3px; top: -11px; width: 20px; height: 20px; border-radius: 50%; background: #c42b1c; color: #fff; font: 13px/20px "Open Sans", sans-serif; text-align: center; }
.wtext { margin-top: -2px; font-size: 14px; line-height: 20px; color: #222; }
.wtext small { display: block; font-size: 14.800px; color: #666; }
.app { position: relative; width: 55px; height: 48px; display: flex; align-items: center; justify-content: center; }
.search { width: 274px; height: 39px; margin: 0 3px 0 4px; padding: 0 7px 0 14px; border: 1px solid #bcc8de; border-radius: 20px; background: #f2f5fc; display: flex; align-items: center; }
.search span { flex: 1; margin-left: 12px; font-size: 16.500px; color: #555; }
.apps { display: flex; }
.run::after { content: ""; position: absolute; left: 23.500px; bottom: 0; width: 8px; height: 4px; border-radius: 2px; background: #80848c; }
.current::before { content: ""; position: absolute; left: 3px; top: 0; width: 49px; height: 48px; border: 1px solid #dfe3ee; border-radius: 6px; background: #e9edf7; }
.current svg { position: relative; }
.current::after { left: 17px; width: 20px; background: #0078d4; }
.tray { margin-left: auto; padding-right: 17px; display: flex; align-items: center; }
.tray span { width: 40px; display: flex; justify-content: center; }
.tray .q { width: 30px; }
.tray .first { margin-left: 5px; }
.clock { width: 93px; margin-top: -1px; text-align: right; font-size: 14.500px; line-height: 20px; color: #222; letter-spacing: -.05px; }
.tray .bell { width: 38px; }
```
